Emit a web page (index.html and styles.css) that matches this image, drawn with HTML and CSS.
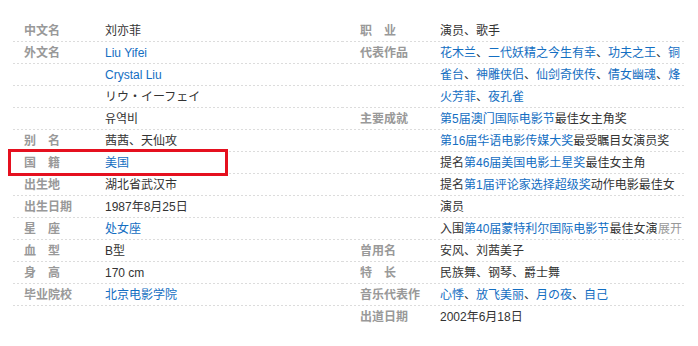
FILE: index.html
```html
<!DOCTYPE html>
<html lang="zh-CN">
<head>
<meta charset="utf-8">
<link rel="stylesheet" href="styles.css">
</head>
<body>
<div class="basic-info">
  <dl class="block block-left">
    <div class="item"><dt class="name">中文名</dt><dd class="value">刘亦菲</dd></div>
    <div class="item"><dt class="name">外文名</dt><dd class="value"><a>Liu Yifei</a></dd></div>
    <div class="item"><dt class="name"></dt><dd class="value"><a>Crystal Liu</a></dd></div>
    <div class="item"><dt class="name"></dt><dd class="value">リウ・イーフェイ</dd></div>
    <div class="item"><dt class="name"></dt><dd class="value">유역비</dd></div>
    <div class="item"><dt class="name spaced">别名</dt><dd class="value">茜茜、天仙攻</dd></div>
    <div class="item highlighted"><dt class="name spaced">国籍</dt><dd class="value"><a>美国</a></dd><span class="mark"></span></div>
    <div class="item"><dt class="name">出生地</dt><dd class="value">湖北省武汉市</dd></div>
    <div class="item"><dt class="name">出生日期</dt><dd class="value">1987年8月25日</dd></div>
    <div class="item"><dt class="name spaced">星座</dt><dd class="value"><a>处女座</a></dd></div>
    <div class="item"><dt class="name spaced">血型</dt><dd class="value">B型</dd></div>
    <div class="item"><dt class="name spaced">身高</dt><dd class="value">170 cm</dd></div>
    <div class="item"><dt class="name">毕业院校</dt><dd class="value"><a>北京电影学院</a></dd></div>
  </dl>
  <dl class="block block-right">
    <div class="item"><dt class="name spaced">职业</dt><dd class="value">演员、歌手</dd></div>
    <div class="item"><dt class="name">代表作品</dt><dd class="value"><a>花木兰</a>、<a>二代妖精之今生有幸</a>、<a>功夫之王</a>、<a>铜雀台</a>、<a>神雕侠侣</a>、<a>仙剑奇侠传</a>、<a>倩女幽魂</a>、<a>烽火芳菲</a>、<a>夜孔雀</a></dd></div>
    <div class="item"><dt class="name">主要成就</dt><dd class="value folded"><a>第5届澳门国际电影节</a>最佳女主角奖<br><a>第16届华语电影传媒大奖</a>最受瞩目女演员奖<br>提名<a>第46届美国电影土星奖</a>最佳女主角<br>提名<a>第1届评论家选择超级奖</a>动作电影最佳女演员<br><span class="last-line"><span class="clip">入围<a>第40届蒙特利尔国际电影节</a>最佳女演员奖</span><span class="expand">展开</span></span></dd></div>
    <div class="item"><dt class="name">曾用名</dt><dd class="value">安风、刘茜美子</dd></div>
    <div class="item"><dt class="name spaced">特长</dt><dd class="value">民族舞、钢琴、爵士舞</dd></div>
    <div class="item"><dt class="name">音乐代表作</dt><dd class="value"><a>心悸</a>、<a>放飞美丽</a>、<a>月の夜</a>、<a>自己</a></dd></div>
    <div class="item no-line"><dt class="name">出道日期</dt><dd class="value">2002年6月18日</dd></div>
  </dl>
</div>
</body>
</html>
```

FILE: styles.css
```css
html, body {
  margin: 0;
  padding: 0;
  background: #fff;
}

body {
  font-family: "Liberation Sans", Arial, "Noto Sans CJK SC", sans-serif;
  font-size: 12px;
  color: #333;
}

.basic-info {
  display: flex;
  padding: 20px 0 0 13px;
  width: 671px;
}

.block {
  margin: 0;
  display: flex;
  flex-direction: column;
}

.block-left {
  width: 329px;
}

.block-right {
  width: 342px;
}

.item {
  display: flex;
  line-height: 22px;
  background-image: conic-gradient(at 2px 21px, transparent 0 180deg, #dcdcdc 180deg 270deg, transparent 270deg);
  background-size: 4px 22px;
  background-repeat: repeat;
}

.item.no-line {
  background-image: none;
}

.name {
  margin: 0;
  font-weight: bold;
  color: #999;
  white-space: nowrap;
  flex: none;
}

.block-left .name {
  width: 81px;
  padding-left: 11px;
}

.block-right .name {
  width: 80px;
  padding-left: 18px;
}

.name.spaced {
  letter-spacing: 12px;
}

.value {
  margin: 0;
  word-break: break-all;
}

.block-left .value {
  width: 237px;
}

.block-right .value {
  width: 242px;
}

.value a {
  color: #136ec2;
  text-decoration: none;
}

.last-line {
  display: flex;
  width: 242px;
}

.clip {
  display: block;
  white-space: nowrap;
  overflow: hidden;
  width: 218px;
  flex: none;
}

.expand {
  display: block;
  color: #999;
  white-space: nowrap;
  flex: none;
}

.highlighted {
  position: relative;
}

.mark {
  position: absolute;
  left: -5px;
  top: -3px;
  width: 214px;
  height: 21px;
  border: 3px solid #e5101f;
}
```
